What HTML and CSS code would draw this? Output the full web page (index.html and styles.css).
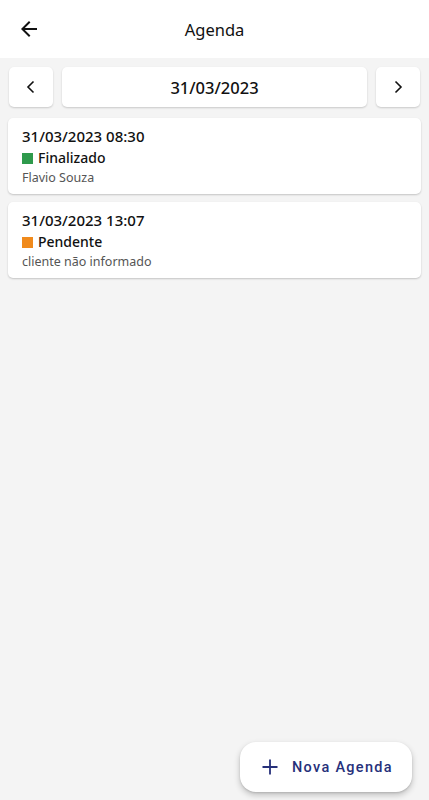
FILE: index.html
```html
<!DOCTYPE html>
<html lang="pt">
<head>
<meta charset="utf-8">
<link rel="stylesheet" href="styles.css">
</head>
<body>
<div class="app">
  <header class="topbar">
    <button class="back" aria-label="Voltar">
      <svg width="24" height="24" viewBox="0 0 24 24"><path d="M20 11H7.83l5.59-5.59L12 4l-8 8 8 8 1.41-1.41L7.83 13H20v-2z" fill="#111"/></svg>
    </button>
    <h1 class="title">Agenda</h1>
  </header>
  <main class="content">
    <div class="datebar">
      <button class="navbtn" aria-label="Anterior">
        <svg width="24" height="24" viewBox="0 0 24 24"><path d="M14.5 6.5 9 12l5.5 5.5" stroke="#111" stroke-width="1.6" fill="none"/></svg>
      </button>
      <div class="datebox">31/03/2023</div>
      <button class="navbtn" aria-label="Próximo">
        <svg width="24" height="24" viewBox="0 0 24 24"><path d="M9.5 6.5 15 12l-5.5 5.5" stroke="#111" stroke-width="1.6" fill="none"/></svg>
      </button>
    </div>
    <div class="list">
      <div class="card">
        <div class="when">31/03/2023 08:30</div>
        <div class="status"><span class="dot done"></span>Finalizado</div>
        <div class="client">Flavio Souza</div>
      </div>
      <div class="card">
        <div class="when">31/03/2023 13:07</div>
        <div class="status"><span class="dot pending"></span>Pendente</div>
        <div class="client">cliente não informado</div>
      </div>
    </div>
  </main>
  <button class="fab">
    <svg width="18" height="18" viewBox="0 0 18 18"><path d="M9 1.5v15M1.5 9h15" stroke="#26307a" stroke-width="1.8" fill="none"/></svg>
    <span>Nova Agenda</span>
  </button>
</div>
</body>
</html>
```

FILE: styles.css
```css
* { box-sizing: border-box; }
html, body { margin: 0; padding: 0; height: 100%; }
body {
  font-family: "Noto Sans", "Open Sans", sans-serif;
  background: #f4f4f4;
  color: #111;
}
.app {
  position: relative;
  min-height: 800px;
  background: #f4f4f4;
}
.topbar {
  height: 58px;
  background: #fff;
  display: flex;
  align-items: center;
  justify-content: center;
  position: relative;
}
.back {
  position: absolute;
  left: 17px;
  top: 17px;
  width: 24px;
  height: 24px;
  padding: 0;
  border: 0;
  background: none;
  display: flex;
}
.title {
  margin: 0;
  font-size: 16.5px;
  font-weight: 400;
  color: #111;
}
.content {
  padding: 9px 8px 0;
}
.datebar {
  display: flex;
  gap: 9px;
  padding: 0 1px;
  height: 40px;
}
.navbtn {
  width: 44px;
  height: 40px;
  border: 0;
  background: #fff;
  border-radius: 5px;
  box-shadow: 0 1px 2px rgba(0,0,0,0.18);
  padding: 0;
  display: flex;
  align-items: center;
  justify-content: center;
}
.datebox {
  flex: 1;
  background: #fff;
  border-radius: 5px;
  box-shadow: 0 1px 2px rgba(0,0,0,0.18);
  display: flex;
  align-items: center;
  justify-content: center;
  font-size: 16.5px;
  font-weight: 500;
}
.list {
  margin-top: 11px;
  display: flex;
  flex-direction: column;
  gap: 8px;
}
.card {
  background: #fff;
  border-radius: 5px;
  box-shadow: 0 1px 2px rgba(0,0,0,0.2);
  height: 76px;
  padding: 8px 14px;
}
.when {
  font-size: 15px;
  font-weight: 500;
  line-height: 20px;
}
.status {
  display: flex;
  align-items: center;
  gap: 5px;
  font-size: 14px;
  font-weight: 500;
  line-height: 22px;
  margin-top: 1px;
}
.dot {
  width: 11px;
  height: 11px;
  display: inline-block;
}
.dot.done { background: #2e9a4c; }
.dot.pending { background: #f08a1c; }
.client {
  font-size: 12.5px;
  color: #555;
  line-height: 18px;
}
.fab {
  position: absolute;
  left: 240px;
  top: 742px;
  width: 172px;
  height: 50px;
  border: 0;
  border-radius: 16px;
  background: #fff;
  box-shadow: 0 3px 6px rgba(0,0,0,0.22), 0 1px 2px rgba(0,0,0,0.12);
  display: flex;
  align-items: center;
  gap: 13px;
  padding: 0 0 0 21px;
  font-family: Roboto, sans-serif;
  font-size: 14.5px;
  font-weight: 500;
  letter-spacing: 1.3px;
  color: #26307a;
}
```
